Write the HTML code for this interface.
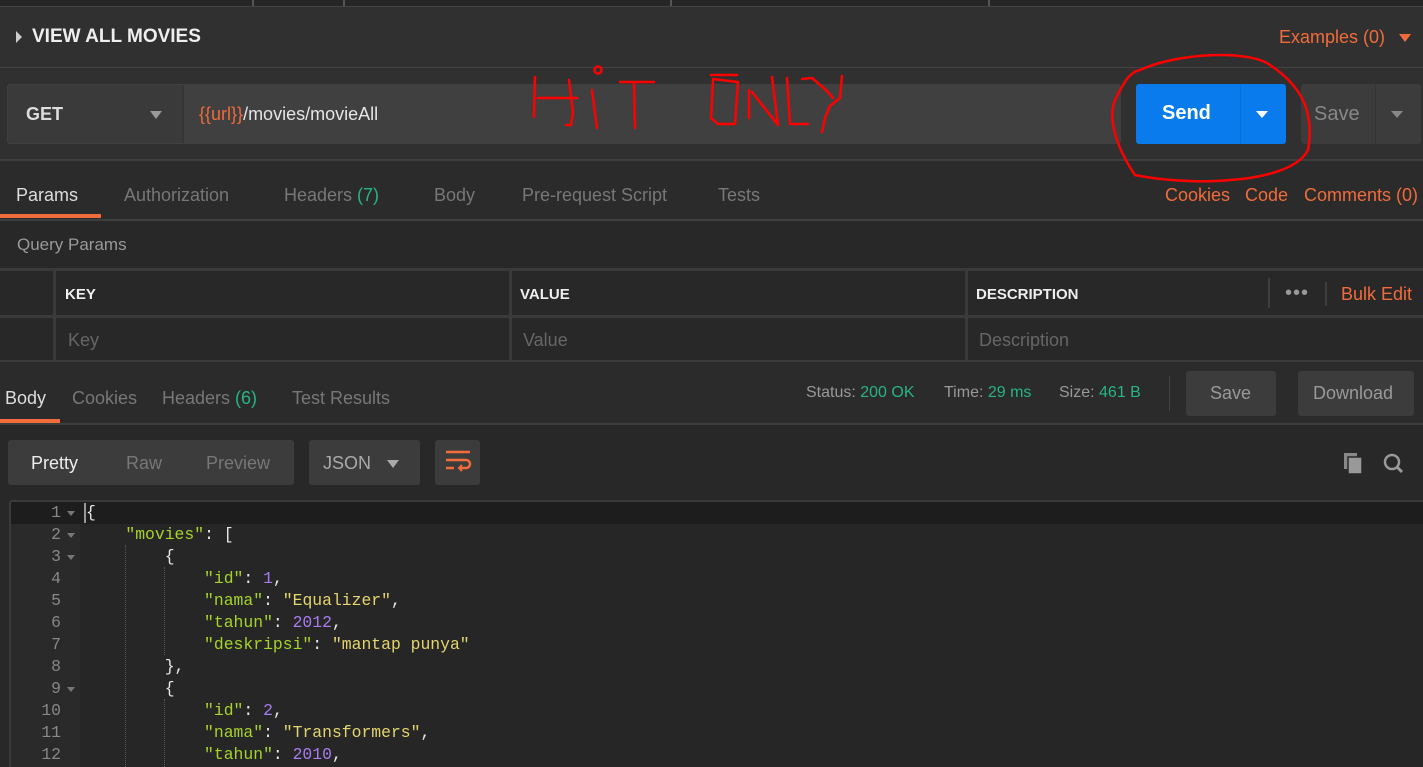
<!DOCTYPE html>
<html><head><meta charset="utf-8"><style>
*{box-sizing:border-box;margin:0;padding:0}
body{width:1423px;height:767px;overflow:hidden;background:#282828;font-family:"Liberation Sans",sans-serif;position:relative;color:#ccc}
.a{position:absolute;white-space:nowrap}
.or{color:#f26b3a}
.gr{color:#27b487}
.mono{font-family:"Liberation Mono",monospace;font-size:16.4px}
</style></head><body>
<!-- top header -->
<div class="a" style="left:0;top:0;width:1423px;height:160px;background:#303030"></div>
<div class="a" style="left:0;top:0;width:1423px;height:6px;background:#262626"></div>
<div class="a" style="left:0;top:6px;width:1423px;height:1px;background:#444"></div>
<div class="a" style="left:252px;top:0;width:2px;height:6px;background:#555"></div>
<div class="a" style="left:343px;top:0;width:2px;height:6px;background:#555"></div>
<div class="a" style="left:670px;top:0;width:2px;height:6px;background:#555"></div>
<div class="a" style="left:988px;top:0;width:2px;height:6px;background:#555"></div>
<div class="a" style="left:16px;top:31px;width:0;height:0;border-left:6px solid #ccc;border-top:6px solid transparent;border-bottom:6px solid transparent"></div>
<div class="a" style="left:32px;top:26px;font-size:19px;font-weight:bold;color:#eee">VIEW ALL MOVIES</div>
<div class="a or" style="left:1279px;top:27px;font-size:18px">Examples (0)</div>
<div class="a" style="left:1399px;top:34px;border-top:8px solid #f26b3a;border-left:6px solid transparent;border-right:6px solid transparent"></div>
<div class="a" style="left:0;top:67px;width:1423px;height:1px;background:#444"></div>
<!-- request bar -->
<div class="a" style="left:7px;top:84px;width:1114px;height:60px;background:#404040;border-radius:3px"></div>
<div class="a" style="left:8px;top:85px;width:174px;height:58px;background:#3a3a3a"></div>
<div class="a" style="left:182px;top:85px;width:2px;height:58px;background:#353535"></div>
<div class="a" style="left:26px;top:104px;font-size:18px;font-weight:bold;color:#ddd">GET</div>
<div class="a" style="left:150px;top:111px;border-top:8px solid #999;border-left:6px solid transparent;border-right:6px solid transparent"></div>
<div class="a" style="left:199px;top:104px;font-size:18px;color:#e5e5e5"><span class="or">{{url}}</span>/movies/movieAll</div>
<div class="a" style="left:1136px;top:84px;width:150px;height:60px;background:#097bed;border-radius:3px"></div>
<div class="a" style="left:1240px;top:84px;width:1px;height:60px;background:#0a6fd6"></div>
<div class="a" style="left:1162px;top:102px;font-size:20px;font-weight:bold;color:#fff">Send</div>
<div class="a" style="left:1256px;top:111px;border-top:7px solid #fff;border-left:6px solid transparent;border-right:6px solid transparent"></div>
<div class="a" style="left:1301px;top:84px;width:120px;height:60px;background:#3c3c3c;border-radius:3px"></div>
<div class="a" style="left:1375px;top:84px;width:1px;height:60px;background:#353535"></div>
<div class="a" style="left:1314px;top:103px;font-size:20px;color:#888">Save</div>
<div class="a" style="left:1391px;top:111px;border-top:7px solid #888;border-left:6px solid transparent;border-right:6px solid transparent"></div>
<div class="a" style="left:0;top:159px;width:1423px;height:2px;background:#3e3e3e"></div>
<!-- tabs -->
<div class="a" style="left:0;top:161px;width:1423px;height:59px;background:#2b2b2b"></div>
<div class="a" style="left:16px;top:185px;font-size:18px;color:#ddd">Params</div>
<div class="a" style="left:124px;top:185px;font-size:18px;color:#777">Authorization</div>
<div class="a" style="left:284px;top:185px;font-size:18px;color:#777">Headers <span class="gr">(7)</span></div>
<div class="a" style="left:434px;top:185px;font-size:18px;color:#777">Body</div>
<div class="a" style="left:522px;top:185px;font-size:18px;color:#777">Pre-request Script</div>
<div class="a" style="left:718px;top:185px;font-size:18px;color:#777">Tests</div>
<div class="a or" style="left:1165px;top:185px;font-size:18px">Cookies</div>
<div class="a or" style="left:1245px;top:185px;font-size:18px">Code</div>
<div class="a or" style="left:1304px;top:185px;font-size:18px">Comments (0)</div>
<div class="a" style="left:0;top:214px;width:101px;height:4px;background:#f26b3a"></div>
<div class="a" style="left:0;top:219px;width:1423px;height:2px;background:#3e3e3e"></div>
<div class="a" style="left:17px;top:235px;font-size:17px;color:#999">Query Params</div>
<!-- table -->
<div class="a" style="left:0;top:268px;width:1423px;height:94px;background:#3a3a3a"></div>
<div class="a" style="left:0;top:271px;width:53px;height:44px;background:#282828"></div>
<div class="a" style="left:56px;top:271px;width:453px;height:44px;background:#282828"></div>
<div class="a" style="left:512px;top:271px;width:453px;height:44px;background:#282828"></div>
<div class="a" style="left:968px;top:271px;width:455px;height:44px;background:#282828"></div>
<div class="a" style="left:0;top:318px;width:53px;height:42px;background:#282828"></div>
<div class="a" style="left:56px;top:318px;width:453px;height:42px;background:#282828"></div>
<div class="a" style="left:512px;top:318px;width:453px;height:42px;background:#282828"></div>
<div class="a" style="left:968px;top:318px;width:455px;height:42px;background:#282828"></div>
<div class="a" style="left:65px;top:286px;font-size:15px;font-weight:bold;color:#eee">KEY</div>
<div class="a" style="left:520px;top:286px;font-size:15px;font-weight:bold;color:#eee">VALUE</div>
<div class="a" style="left:976px;top:286px;font-size:15px;font-weight:bold;color:#eee">DESCRIPTION</div>
<div class="a" style="left:1268px;top:278px;width:2px;height:30px;background:#3e3e3e"></div>
<div class="a" style="left:1325px;top:282px;width:2px;height:24px;background:#3e3e3e"></div>
<div class="a" style="left:1285px;top:282px;font-size:20px;color:#999;letter-spacing:1px">•••</div>
<div class="a or" style="left:1341px;top:284px;font-size:18px">Bulk Edit</div>
<div class="a" style="left:68px;top:330px;font-size:18px;color:#666">Key</div>
<div class="a" style="left:523px;top:330px;font-size:18px;color:#666">Value</div>
<div class="a" style="left:979px;top:330px;font-size:18px;color:#666">Description</div>
<!-- response -->
<div class="a" style="left:0;top:362px;width:1423px;height:61px;background:#2b2b2b"></div>
<div class="a" style="left:5px;top:388px;font-size:18px;color:#ddd">Body</div>
<div class="a" style="left:72px;top:388px;font-size:18px;color:#777">Cookies</div>
<div class="a" style="left:162px;top:388px;font-size:18px;color:#777">Headers <span class="gr">(6)</span></div>
<div class="a" style="left:292px;top:388px;font-size:18px;color:#777">Test Results</div>
<div class="a" style="left:0;top:419px;width:60px;height:4px;background:#f26b3a"></div>
<div class="a" style="left:0;top:423px;width:1423px;height:2px;background:#3e3e3e"></div>
<div class="a" style="left:806px;top:384px;font-size:16px;color:#999">Status: <span class="gr">200 OK</span></div>
<div class="a" style="left:944px;top:384px;font-size:16px;color:#999">Time: <span class="gr">29 ms</span></div>
<div class="a" style="left:1059px;top:384px;font-size:16px;color:#999">Size: <span class="gr">461 B</span></div>
<div class="a" style="left:1169px;top:376px;width:1px;height:35px;background:#444"></div>
<div class="a" style="left:1186px;top:371px;width:90px;height:45px;background:#3c3c3c;border-radius:3px"></div>
<div class="a" style="left:1210px;top:383px;font-size:18px;color:#999">Save</div>
<div class="a" style="left:1298px;top:371px;width:116px;height:45px;background:#3c3c3c;border-radius:3px"></div>
<div class="a" style="left:1313px;top:383px;font-size:18px;color:#999">Download</div>
<div class="a" style="left:8px;top:440px;width:286px;height:45px;background:#3c3c3c;border-radius:3px"></div>
<div class="a" style="left:31px;top:453px;font-size:18px;color:#eee">Pretty</div>
<div class="a" style="left:126px;top:453px;font-size:18px;color:#777">Raw</div>
<div class="a" style="left:206px;top:453px;font-size:18px;color:#777">Preview</div>
<div class="a" style="left:309px;top:440px;width:111px;height:45px;background:#3c3c3c;border-radius:3px"></div>
<div class="a" style="left:323px;top:453px;font-size:18px;color:#aaa">JSON</div>
<div class="a" style="left:387px;top:460px;border-top:8px solid #aaa;border-left:6px solid transparent;border-right:6px solid transparent"></div>
<div class="a" style="left:435px;top:440px;width:45px;height:45px;background:#3c3c3c;border-radius:3px"></div>
<svg class="a" style="left:435px;top:440px" width="45" height="45"><g stroke="#f26b3a" stroke-width="2.5" fill="none"><path d="M11 12H35M11 20H31a4 4 0 0 1 0 8H25M11 28H19"/><path d="M27 25l-3 3 3 3" stroke-width="2"/></g></svg>
<svg class="a" style="left:1342px;top:450px" width="70" height="28"><rect x="2" y="3" width="13" height="16" fill="#888"/><rect x="6" y="7" width="14" height="17" fill="#999" stroke="#282828" stroke-width="1.5"/><circle cx="50" cy="12" r="7" stroke="#999" stroke-width="2.5" fill="none"/><path d="M55 17l5 5" stroke="#999" stroke-width="3"/></svg>
<!-- editor -->
<div class="a" style="left:9px;top:500px;width:1414px;height:267px;background:#262626;border-top:2px solid #3a3a3a;border-left:2px solid #3a3a3a;border-radius:3px 0 0 0"></div>
<div class="a" style="left:11px;top:502px;width:69px;height:265px;background:#2a2a2a"></div>
<div class="a" style="left:11px;top:502px;width:1412px;height:22px;background:#1d1d1d"></div>
<div class="a" style="left:84px;top:503px;width:2px;height:20px;background:#999"></div>
<div class="a" style="left:125px;top:545px;border-left:1px dotted #555;height:222px"></div>
<div class="a" style="left:164px;top:567px;border-left:1px dotted #555;height:88px"></div>
<div class="a" style="left:164px;top:699px;border-left:1px dotted #555;height:68px"></div>
<div class="a mono" style="left:11px;top:502px;width:50px;text-align:right;line-height:22px;color:#888">1<br>2<br>3<br>4<br>5<br>6<br>7<br>8<br>9<br>10<br>11<br>12</div>
<div class="a" style="left:67px;top:511px;border-top:5px solid #777;border-left:4px solid transparent;border-right:4px solid transparent"></div>
<div class="a" style="left:67px;top:533px;border-top:5px solid #777;border-left:4px solid transparent;border-right:4px solid transparent"></div>
<div class="a" style="left:67px;top:555px;border-top:5px solid #777;border-left:4px solid transparent;border-right:4px solid transparent"></div>
<div class="a" style="left:67px;top:687px;border-top:5px solid #777;border-left:4px solid transparent;border-right:4px solid transparent"></div>
<div class="a mono" style="left:86px;top:502px;line-height:22px;color:#e8e8e8;white-space:pre"><span style="color:#e8e8e8">{</span>
    <span style="color:#a6d32a">"movies"</span>: [
        {
            <span style="color:#a6d32a">"id"</span>: <span style="color:#a87cf0">1</span>,
            <span style="color:#a6d32a">"nama"</span>: <span style="color:#e4d56d">"Equalizer"</span>,
            <span style="color:#a6d32a">"tahun"</span>: <span style="color:#a87cf0">2012</span>,
            <span style="color:#a6d32a">"deskripsi"</span>: <span style="color:#e4d56d">"mantap punya"</span>
        },
        {
            <span style="color:#a6d32a">"id"</span>: <span style="color:#a87cf0">2</span>,
            <span style="color:#a6d32a">"nama"</span>: <span style="color:#e4d56d">"Transformers"</span>,
            <span style="color:#a6d32a">"tahun"</span>: <span style="color:#a87cf0">2010</span>,</div>
<!-- red annotations -->
<svg class="a" style="left:0;top:0" width="1423" height="767"><g stroke="#ff0000" stroke-width="2.5" fill="none" stroke-linecap="round" stroke-linejoin="round">
<path d="M535 77L534 117"/><path d="M538 98L577 98"/><path d="M569 80L573 112L571 125L566 125"/>
<circle cx="598" cy="70" r="3.5"/><path d="M592 90L597 128"/>
<path d="M620 82L654 82"/><path d="M634 82L635 128"/>
<path d="M711 75L737 75"/><path d="M713 80L711 118L718 124L735 124L738 82L713 79"/>
<path d="M749 90L749 118"/><path d="M752 92L778 125"/><path d="M772 77L778 125"/>
<path d="M787 78L790 124L808 124"/>
<path d="M802 79L812 78L826 90L833 98"/><path d="M842 76L840 98L830 106L825 118L822 132"/>
<path d="M1140 70C1180 52 1250 50 1270 65C1300 85 1315 110 1308 150C1298 170 1260 178 1230 180C1190 184 1150 178 1135 175C1118 150 1107 120 1115 100C1125 80 1130 72 1140 70Z"/>
</g></svg>
</body></html>
